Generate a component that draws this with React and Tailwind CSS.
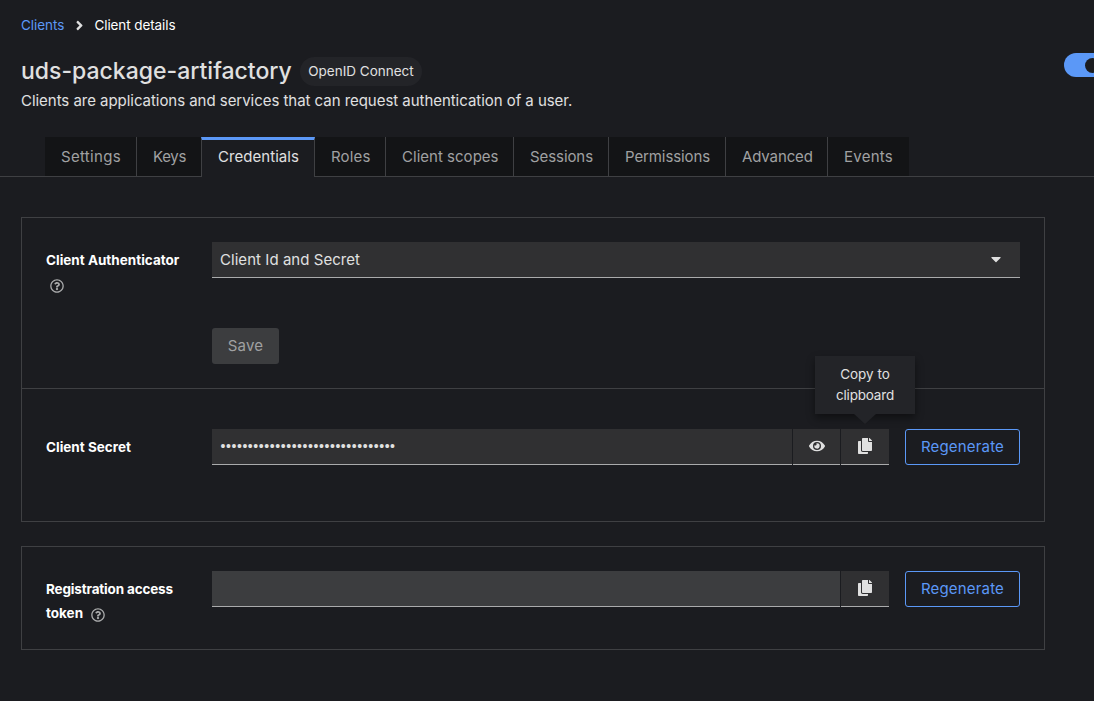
import React from "react";
import {
  FaAngleRight,
  FaCaretDown,
  FaCopy,
  FaEye,
  FaRegQuestionCircle,
} from "react-icons/fa";

const tabs = [
  { label: "Settings", width: "w-[92px]", tracking: "tracking-[0.31px]" },
  { label: "Keys", width: "w-[64px]", tracking: "tracking-[-0.32px]" },
  { label: "Credentials", width: "w-[114px]", tracking: "tracking-[0.05px]", active: true },
  { label: "Roles", width: "w-[71px]", tracking: "tracking-[0.15px]" },
  { label: "Client scopes", width: "w-[128px]", tracking: "tracking-[0.02px]" },
  { label: "Sessions", width: "w-[95px]", tracking: "tracking-[-0.08px]" },
  { label: "Permissions", width: "w-[117px]", tracking: "tracking-[-0.1px]" },
  { label: "Advanced", width: "w-[102px]", tracking: "tracking-[-0.12px]" },
  { label: "Events", width: "w-[81px]", tracking: "tracking-[0.25px]" },
];

function Tab({ tab, divider }) {
  if (tab.active) {
    return (
      <button
        className={`${tab.width} ${tab.tracking} h-10 border-x border-t-3 border-x-[#3f4043] border-t-[#5b98f7] bg-[#1b1c20] pb-0.5 pl-4 text-left whitespace-nowrap text-[#e0e0e0]`}
      >
        {tab.label}
      </button>
    );
  }
  return (
    <button
      className={`${tab.width} ${tab.tracking} h-[39px] bg-[#131416] pt-0.5 pl-4 text-left whitespace-nowrap text-[#a0a1a2] ${
        divider ? "border-r border-[#3f4043]" : ""
      }`}
    >
      {tab.label}
    </button>
  );
}

function Regenerate() {
  return (
    <button className="ml-4 h-9 w-[115px] rounded-[3px] border border-[#5b98f7] text-[15px] tracking-[0.17px] text-[#5b98f7]">
      Regenerate
    </button>
  );
}

function IconButton({ label, wide, children }) {
  return (
    <button
      aria-label={label}
      className={`relative ml-px flex h-9 items-center justify-center border-b border-[#aaabac] bg-[#303032] pb-0.5 text-base text-[#e0e0e0] ${
        wide ? "w-12" : "w-[47px]"
      }`}
    >
      {children}
    </button>
  );
}

function Tooltip() {
  return (
    <span className="absolute bottom-[50px] left-1/2 flex h-[58px] w-[100px] -translate-x-1/2 flex-col items-center justify-center bg-[#232428] text-[13.5px] leading-[21px] shadow-[0_4px_8px_rgba(0,0,0,0.45)]">
      <span>Copy to</span>
      <span className="tracking-[-0.19px]">clipboard</span>
      <svg className="absolute top-full left-[39px] h-[10px] w-[22px]" viewBox="0 0 22 10">
        <path d="M0 0h22L11 10z" fill="#232428" />
      </svg>
    </span>
  );
}

export default function App() {
  return (
    <div className="flex h-[701px] w-[1094px] flex-col overflow-hidden bg-[#1b1c20] font-['Inter','Liberation_Sans',sans-serif] text-[#e0e0e0]">
      <nav className="mt-[15px] flex h-5 items-center pl-[21px] text-[13.5px] leading-5">
        <a className="w-[43px] tracking-[-0.05px] whitespace-nowrap text-[#5b98f7]">Clients</a>
        <FaAngleRight className="mr-2 ml-[7.5px] size-[15px] text-[#e0e0e0]" />
        <span className="tracking-[-0.1px] text-white">Client details</span>
      </nav>

      <header className="mt-[18px] flex h-[60px] justify-between overflow-hidden pl-[21px]">
        <div>
          <div className="mt-1 flex h-[29px] items-center">
            <h1 className="w-[279px] text-[23px] leading-[29px] font-medium whitespace-nowrap">
              uds-package-artifactory
            </h1>
            <span className="flex h-[29px] w-[122px] items-center justify-center rounded-full bg-[#232428] text-[13.5px] leading-[29px]">
              OpenID Connect
            </span>
          </div>
          <p className="mt-[3px] text-[15px] leading-6 tracking-[-0.04px]">
            Clients are applications and services that can request authentication of a user.
          </p>
        </div>
        <div className="flex h-6 w-[30px] items-center rounded-l-full bg-[#5b98f7] pl-[21px]">
          <span className="size-[15px] shrink-0 rounded-full bg-[#1b1c20]" />
        </div>
      </header>

      <div className="mt-6 flex h-10 shrink-0 text-[15px]">
        <div className="w-[45px] border-b border-[#3f4043]" />
        {tabs.map((tab, i) => (
          <div key={tab.label} className={tab.active ? "h-10" : "h-10 border-b border-[#3f4043]"}>
            <Tab tab={tab} divider={i !== 1 && i !== tabs.length - 1} />
          </div>
        ))}
        <div className="flex-1 border-b border-[#3f4043]" />
      </div>

      <section className="mt-10 ml-[21px] h-[305px] w-[1024px] shrink-0 border border-[#3f4043]">
        <div className="flex h-[171px] border-b border-[#3f4043] pt-6 pl-6">
          <div className="w-[166px] pt-1.5 text-[13.5px] leading-6 font-bold text-white">
            Client Authenticator
            <FaRegQuestionCircle className="mt-[7px] ml-1 size-[14px] text-[#aaabac]" />
          </div>
          <div>
            <div className="flex h-9 w-[808px] items-center justify-between border-b border-[#aaabac] bg-[#303032] pr-4 pl-2 text-[15px] tracking-[0.05px]">
              <span className="pt-px">Client Id and Secret</span>
              <FaCaretDown className="mb-0.5 size-4" />
            </div>
            <button className="mt-[50px] h-9 w-[67px] rounded-[3px] bg-[#3c3d3f] text-[15px] tracking-[0.2px] text-[#a0a1a2]">
              Save
            </button>
          </div>
        </div>
        <div className="flex pt-10 pl-6">
          <div className="w-[166px] pt-1.5 text-[13.5px] leading-6 font-bold text-white">
            Client Secret
          </div>
          <div className="flex h-9 w-[580px] items-center border-b border-[#aaabac] bg-[#303032] pl-[8.5px] font-['Liberation_Sans',sans-serif] text-[14px] tracking-[0.57px]">
            ••••••••••••••••••••••••••••••••
          </div>
          <IconButton label="Show">
            <FaEye />
          </IconButton>
          <IconButton label="Copy" wide>
            <FaCopy />
            <Tooltip />
          </IconButton>
          <Regenerate />
        </div>
      </section>

      <section className="mt-6 ml-[21px] flex h-[104px] w-[1024px] shrink-0 border border-[#3f4043] pt-6 pl-6">
        <div className="w-[166px] pt-1.5 text-[13.5px] leading-6 font-bold text-white">
          <div className="tracking-[-0.16px]">Registration access</div>
          <div className="flex items-center">
            token
            <FaRegQuestionCircle className="mt-[3px] ml-2 size-[14px] text-[#aaabac]" />
          </div>
        </div>
        <div className="h-9 w-[628px] border-b border-[#aaabac] bg-[#3c3d3f]" />
        <IconButton label="Copy" wide>
          <FaCopy />
        </IconButton>
        <Regenerate />
      </section>
    </div>
  );
}
